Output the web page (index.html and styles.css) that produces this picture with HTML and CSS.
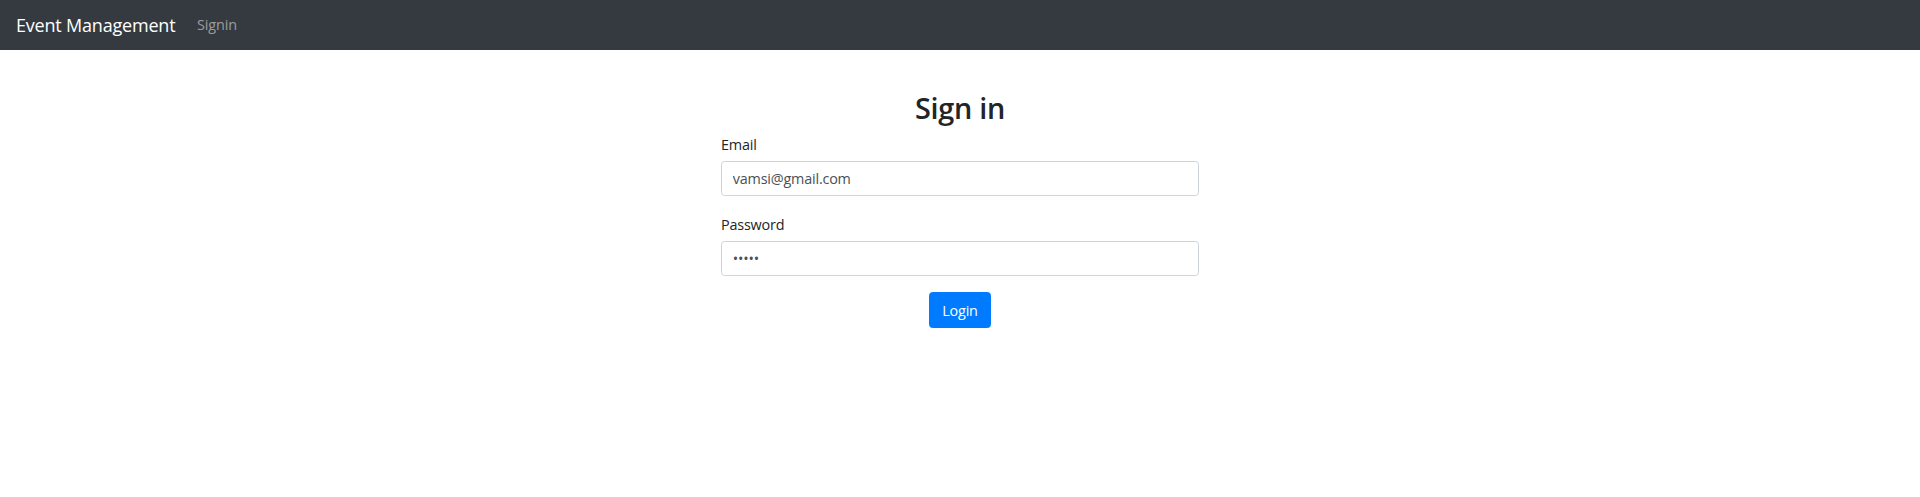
FILE: index.html
```html
<!DOCTYPE html>
<html lang="en">
<head>
<meta charset="utf-8">
<title>Event Management</title>
<link rel="stylesheet" href="styles.css">
</head>
<body>
<nav class="navbar">
  <a class="brand" href="#">Event Management</a>
  <a class="nav-link" href="#">Signin</a>
</nav>
<main class="main">
  <form class="signin">
    <h2 class="title">Sign in</h2>
    <div class="group">
      <label class="label" for="email">Email</label>
      <input class="input" id="email" type="email" value="vamsi@gmail.com">
    </div>
    <div class="group">
      <label class="label" for="password">Password</label>
      <input class="input" id="password" type="password" value="12345">
    </div>
    <div class="actions">
      <button class="btn" type="button">Login</button>
    </div>
  </form>
</main>
</body>
</html>
```
FILE: styles.css
```css
* { box-sizing: border-box; }
html, body { margin: 0; padding: 0; }
body {
  font-family: "Open Sans", "Noto Sans", "Liberation Sans", sans-serif;
  font-size: 14.4px;
  line-height: 1.5;
  color: #212529;
  background: #fff;
  width: 1920px;
  height: 497px;
  overflow: hidden;
}
.navbar {
  height: 50px;
  background: #343a40;
  display: flex;
  align-items: center;
  padding: 0 14.4px 0 16px;
}
.brand {
  color: #fff;
  text-decoration: none;
  font-size: 18px;
  line-height: 1.5;
  margin-right: 14.4px;
  letter-spacing: -0.2px;
}
.nav-link {
  color: rgba(255,255,255,.5);
  text-decoration: none;
  padding: 7.2px;
  letter-spacing: -0.1px;
}
.main {
  display: flex;
  justify-content: center;
  padding-top: 41px;
}
.signin {
  width: 478px;
  display: flex;
  flex-direction: column;
}
.title {
  margin: 0 0 8px;
  text-align: center;
  font-size: 28.8px;
  font-weight: 600;
  line-height: 1.2;
  letter-spacing: -0.3px;
}
.group {
  display: flex;
  flex-direction: column;
}
.group + .group {
  margin-top: 17.5px;
}
.label {
  margin-bottom: 6px;
  font-size: 14.4px;
  line-height: 21.6px;
  letter-spacing: -0.2px;
}
.input {
  height: 35px;
  width: 100%;
  padding: 5.4px 10.8px;
  font-family: inherit;
  font-size: 14.4px;
  color: #495057;
  border: 1px solid #ced4da;
  border-radius: 3.6px;
  background: #fff;
  outline: none;
  letter-spacing: -0.2px;
}
.actions {
  display: flex;
  justify-content: center;
  margin-top: 16px;
}
.btn {
  height: 36px;
  width: 62px;
  padding: 0;
  font-family: inherit;
  font-size: 14.4px;
  color: #fff;
  background: #007bff;
  border: 1px solid #007bff;
  border-radius: 3.6px;
  letter-spacing: -0.2px;
}
```
